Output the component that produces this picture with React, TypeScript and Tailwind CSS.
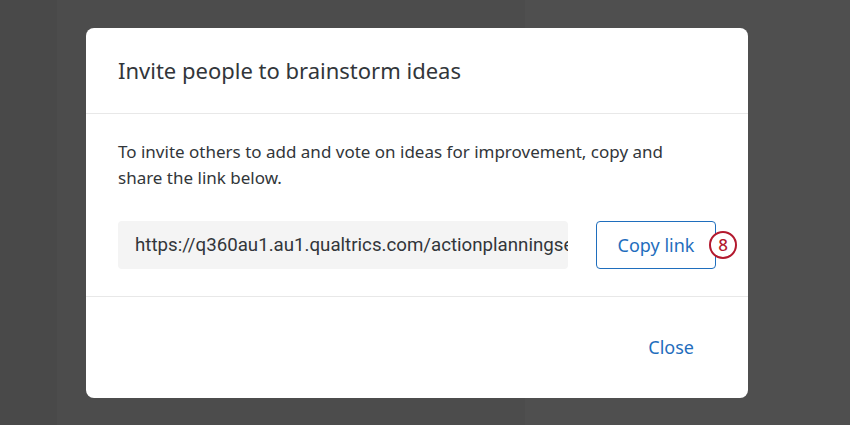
import React from "react";

const BLUE = "text-[#1f6ebd]";

function Badge({ n }: { n: number }) {
  return (
    <span className="absolute -right-[21px] top-1/2 flex h-7 w-7 -translate-y-1/2 items-center justify-center rounded-full border-[2.5px] border-[#b3192e] bg-white text-[17px] font-medium text-[#b3192e]">
      {n}
    </span>
  );
}

export default function App() {
  const url = "https://q360au1.au1.qualtrics.com/actionplanningservice/brainstorm/invite";

  return (
    <div
      className="relative flex h-[425px] w-[850px] overflow-hidden bg-[#4f4f4f]"
      style={{ fontFamily: '"Noto Sans", "Open Sans", sans-serif' }}
    >
      {/* page behind the overlay */}
      <div className="w-[57px] bg-[#494949]" />
      <div className="w-[468px] bg-[#4c4c4c]" />
      <div className="flex-1" />

      {/* dialog */}
      <div className="absolute left-[86px] top-[28px] flex h-[370px] w-[662px] flex-col rounded-lg bg-white">
        <div className="flex h-[86px] items-center px-8 border-b border-[#e8e8e8]">
          <h2 className="text-[22px] text-[#32363a]">Invite people to brainstorm ideas</h2>
        </div>

        <div className="flex flex-col px-8 pt-[25px] pb-[27px] border-b border-[#e8e8e8]">
          <p className="max-w-[565px] text-[17px] leading-[26px] text-[#32363a]">
            To invite others to add and vote on ideas for improvement, copy and share the link below.
          </p>
          <div className="mt-[30px] flex items-center gap-7">
            <div className="flex h-12 w-[450px] shrink-0 items-center overflow-hidden rounded bg-[#f4f4f4] px-[17px]">
              <span
                className="whitespace-nowrap text-[18.7px] text-[#32363a]"
                style={{ fontFamily: "Roboto, sans-serif" }}
              >
                {url}
              </span>
            </div>
            <div className="relative">
              <button className={`h-12 w-[120px] rounded border-[1.5px] border-[#1f6ebd] bg-white text-[18px] ${BLUE}`}>
                Copy link
              </button>
              <Badge n={8} />
            </div>
          </div>
        </div>

        <div className="flex flex-1 items-center justify-end pr-[54px]">
          <button className={`text-[18px] ${BLUE}`}>Close</button>
        </div>
      </div>
    </div>
  );
}
